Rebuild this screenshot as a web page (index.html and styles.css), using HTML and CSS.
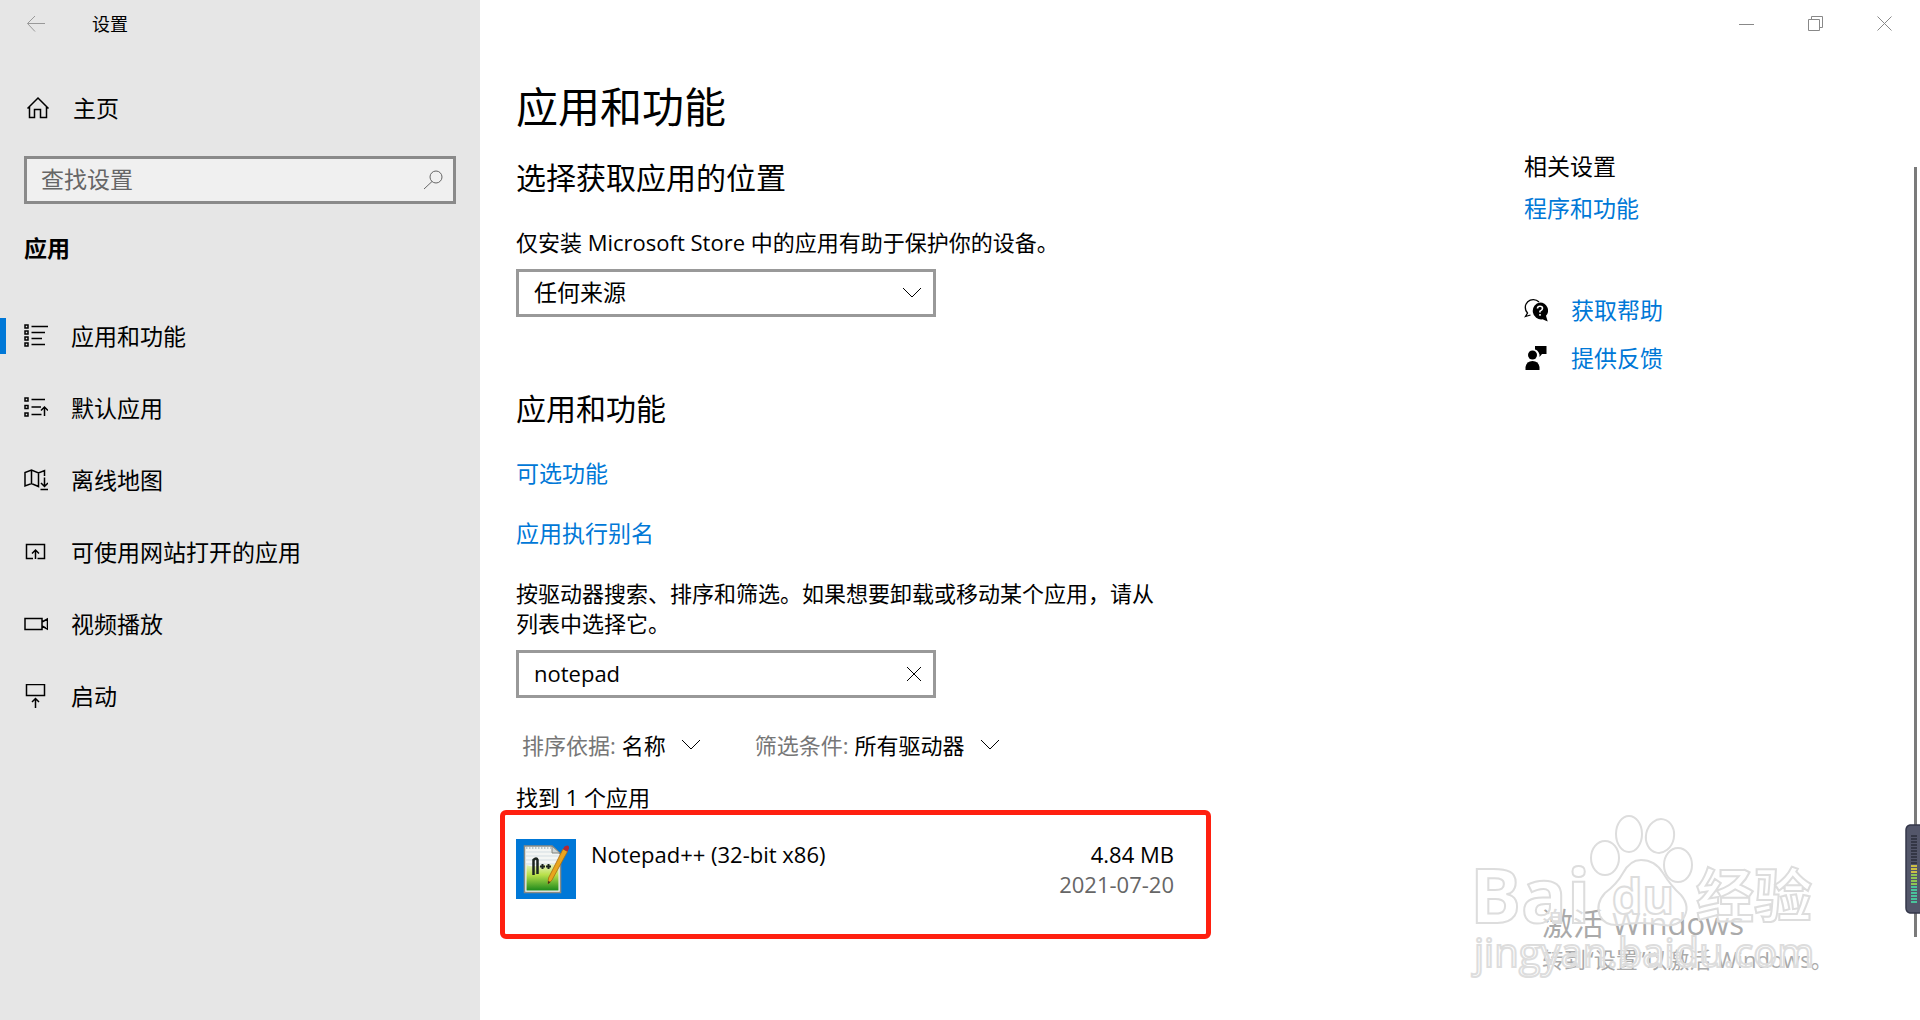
FILE: index.html
```html
<!DOCTYPE html>
<html lang="zh-CN">
<head>
<meta charset="utf-8">
<title>设置</title>
<link rel="stylesheet" href="styles.css">
</head>
<body>
<div class="window">
  <aside class="sidebar">
    <header class="app-bar">
      <button class="back" type="button" aria-label="返回">
        <svg width="20" height="18" viewBox="0 0 20 18"><path d="M9 1 1.5 8.500 9 16.500M1.500 8.500H19"/></svg>
      </button>
      <span class="app-name">设置</span>
    </header>
    <a class="home" href="#">
      <svg width="24" height="24" viewBox="0 0 24 24"><path d="M1.500 12.500 12 2l10.500 10.500M3.500 10.500V21.500h5v-8h6v8h6V10.500"/></svg>
      <span>主页</span>
    </a>
    <div class="search">
      <input type="search" placeholder="查找设置" aria-label="查找设置">
      <svg width="20" height="20" viewBox="0 0 20 20"><circle cx="13" cy="7" r="6"/><path d="M9 11.500 1 19"/></svg>
    </div>
    <h2 class="group">应用</h2>
    <nav class="nav">
      <a class="nav-item current" href="#">
        <svg width="24" height="24" viewBox="0 0 24 24"><path d="M1 1h3v3H1zM1 7h3v3H1zM1 13h3v3H1zM1 19h3v3H1zM7.500 2.500H24M7.500 8.500H21M7.500 14.500H18M7.500 20.500H21"/></svg>
        <span>应用和功能</span>
      </a>
      <a class="nav-item" href="#">
        <svg width="24" height="24" viewBox="0 0 24 24"><path d="M1 2h3v3H1zM1 9.500h3v3H1zM1 17h3v3H1zM7.500 3.500H21M7.500 11H17M7.500 18.500H17.500M20.500 20V11M17 14.500l3.500-3.500 3.500 3.500"/></svg>
        <span>默认应用</span>
      </a>
      <a class="nav-item" href="#">
        <svg width="24" height="24" viewBox="0 0 24 24"><path d="M20.500 8V2.500l-6 2.500-7-3-6.500 2.500V18l6.500-2.500 7 3V5M7.500 2v13.500M20.500 9.500v9M17 15l3.500 3.500L24 15M16.500 21.500H24"/></svg>
        <span>离线地图</span>
      </a>
      <a class="nav-item" href="#">
        <svg width="24" height="24" viewBox="0 0 24 24"><path d="M9 18.500H2.500v-14h18v14H13.500M11.500 19V10M8 13.500l3.500-3.500 3.500 3.500"/></svg>
        <span>可使用网站打开的应用</span>
      </a>
      <a class="nav-item" href="#">
        <svg width="24" height="24" viewBox="0 0 24 24"><path d="M1 6.500h17v11H1zM18 10l5.500-3v10L18 14"/></svg>
        <span>视频播放</span>
      </a>
      <a class="nav-item" href="#">
        <svg width="24" height="24" viewBox="0 0 24 24"><path d="M2.500 .500h18v11h-18zM11.500 24V14.500M8 18l3.500-3.500L15 18"/></svg>
        <span>启动</span>
      </a>
    </nav>
  </aside>

  <div class="page">
    <header class="window-bar">
      <button type="button" aria-label="最小化"><svg width="16" height="16" viewBox="0 0 16 16"><path d="M0 8.500h15"/></svg></button>
      <button type="button" aria-label="还原"><svg width="16" height="16" viewBox="0 0 16 16"><path d="M.500 3.500h11v11H.500zM3.500 3.500v-3h11v11h-3"/></svg></button>
      <button type="button" aria-label="关闭"><svg width="16" height="16" viewBox="0 0 16 16"><path d="M.500 .500l14 14M14.500 .500l-14 14"/></svg></button>
    </header>

    <div class="columns">
      <main class="primary">
        <h1>应用和功能</h1>

        <h2 class="source-title">选择获取应用的位置</h2>
        <label class="note" for="source">仅安装 Microsoft Store 中的应用有助于保护你的设备。</label>
        <div class="field">
          <select id="source"><option>任何来源</option></select>
          <svg class="chevron" width="20" height="12" viewBox="0 0 20 12"><path d="M1 1l9 9 9-9"/></svg>
        </div>

        <h2 class="list-title">应用和功能</h2>
        <div class="links">
          <a href="#">可选功能</a>
          <a href="#">应用执行别名</a>
        </div>
        <label class="note" for="filter">按驱动器搜索、排序和筛选。如果想要卸载或移动某个应用，请从列表中选择它。</label>
        <div class="field">
          <input id="filter" type="text" value="notepad">
          <button class="clear" type="button" aria-label="清除"><svg width="16" height="16" viewBox="0 0 16 16"><path d="M1 1l14 14M15 1L1 15"/></svg></button>
        </div>

        <div class="sorting">
          <div class="pick">
            <label for="sort">排序依据:</label>
            <select id="sort"><option>名称</option></select>
            <svg class="chevron" width="20" height="12" viewBox="0 0 20 12"><path d="M1 1l9 9 9-9"/></svg>
          </div>
          <div class="pick">
            <label for="drive">筛选条件:</label>
            <select id="drive"><option>所有驱动器</option></select>
            <svg class="chevron" width="20" height="12" viewBox="0 0 20 12"><path d="M1 1l9 9 9-9"/></svg>
          </div>
        </div>

        <p class="found">找到 1 个应用</p>
        <article class="app">
          <svg class="app-icon" width="60" height="60" viewBox="0 0 60 60">
            <defs>
              <linearGradient id="grass" x1="0" y1="0" x2="0" y2="1">
                <stop offset="0" stop-color="#e8f2c0"/><stop offset=".4" stop-color="#b9e04a"/><stop offset="1" stop-color="#1d8a1c"/>
              </linearGradient>
            </defs>
            <path fill="#0078d7" d="M0 0h60v60H0z"/>
            <path fill="#f4f6f4" stroke="#8b8b83" stroke-width="1.500" d="M8.500 7H36l8.500 8v38.500h-36z"/>
            <path stroke="#b9c8cc" stroke-width="2" stroke-dasharray="1.500 1.500" d="M10 9h25"/>
            <path stroke="#d3dde2" d="M10 13h25M10 17h33M10 21h33M10 25h33"/>
            <path fill="url(#grass)" d="M10.500 26c10 4 20-3 32 0v25.500h-32z"/>
            <path fill="#cfd4d4" stroke="#80847e" d="M36 7v7h8z"/>
            <path fill="none" stroke="#1c2420" stroke-width="2.500" d="M17.500 36V21q3-3 4 0v14"/>
            <path stroke="#1c2420" stroke-width="2" d="M24 27.500h5M26.500 25v5M30 27.500h5M32.500 25v5"/>
            <path fill="#e9a51d" stroke="#a86c12" stroke-width=".800" d="M47 10l4.500 2.500L36 41l-4 4 .500-6z"/>
            <path fill="#b32634" d="M48.500 7.500q5-3 4.500 2L51.500 12.500 47 10z"/>
            <path fill="#3a2d1c" d="M32 45l.2-3 2.300 1z"/>
          </svg>
          <div class="app-name-cell">Notepad++ (32-bit x86)</div>
          <div class="app-meta">
            <div>4.84 MB</div>
            <time datetime="2021-07-20">2021-07-20</time>
          </div>
          <div class="highlight"></div>
        </article>
      </main>

      <aside class="related">
        <h2>相关设置</h2>
        <a href="#">程序和功能</a>
        <div class="help">
          <a href="#">
            <svg class="solid" width="24" height="24" viewBox="0 0 24 24"><path fill="none" stroke="#000" stroke-width="1.300" d="M6.500 17 1.500 18.500l2-3.500A7.500 7.500 0 1 1 15 4"/><path d="M16 4.500a8 8 0 0 1 6 13.300l1.700 5.700-5.200-2.200A8.200 8.200 0 1 1 16 4.500z"/><path fill="none" stroke="#fff" stroke-width="1.600" d="M13.500 10.500q0-2.200 2.500-2.200t2.500 2-2.500 3v1.200M16 16v1.700"/></svg>
            <span>获取帮助</span>
          </a>
          <a href="#">
            <svg class="solid" width="24" height="24" viewBox="0 0 24 24"><path d="M11 0h11.500v8H18l-2.500 3V8.500Q14 4 11 3.500z"/><circle cx="8.500" cy="9" r="4.500"/><path d="M1.500 24v-3q1-6 7-6t7 6v3z"/></svg>
            <span>提供反馈</span>
          </a>
        </div>
      </aside>
    </div>

    <div class="scrollbar"></div>
    <svg class="meter" width="15" height="90" viewBox="0 0 15 90">
      <path fill="#53566a" stroke="#34374a" stroke-width="1.500" d="M16 1H5Q1 2 1 6v78q0 4 4 5h11z"/>
      <path stroke="#343746" stroke-width="6" stroke-dasharray="2 1" d="M9 11v30"/>
      <path stroke="#cdbf45" stroke-width="6" stroke-dasharray="2 1" d="M9 41v9"/>
      <path stroke="#8fc653" stroke-width="6" stroke-dasharray="2 1" d="M9 50v12"/>
      <path stroke="#49c39b" stroke-width="6" stroke-dasharray="2 1" d="M9 62v18"/>
    </svg>

    <div class="activation">
      <div class="activation-title">激活 Windows</div>
      <div class="activation-text">转到“设置”以激活 Windows。</div>
    </div>
    <svg class="watermark" width="360" height="180" viewBox="0 0 360 180">
      <g class="mark">
        <ellipse cx="135" cy="48" rx="14" ry="17"/>
        <ellipse cx="159" cy="24" rx="13" ry="18"/>
        <ellipse cx="190" cy="26" rx="14" ry="17" transform="rotate(12 190 26)"/>
        <ellipse cx="208" cy="55" rx="14" ry="17"/>
        <path d="M171 50q14 0 22 13t18 22q10 12 2 24-7 8-20 6-22-4-44 0-14 1-19-9-5-12 5-23 12-9 18-20 7-13 18-13z"/>
        <text class="mark-brand" x="0" y="113">Bai</text>
        <text class="mark-du" x="142" y="104">du</text>
        <text class="mark-cn" x="226" y="107">经验</text>
        <text class="mark-url" x="4" y="157">jingyan.baidu.com</text>
      </g>
    </svg>
  </div>
</div>
</body>
</html>
```
FILE: styles.css
```css
* {
  box-sizing: border-box;
}

body {
  margin: 0;
  background: #fff;
  color: #000;
  font: 23px/30px "Open Sans", "Noto Sans CJK SC", sans-serif;
}

h1,
h2,
p {
  margin: 0;
  font-weight: 400;
}

a {
  color: #0078d7;
  text-decoration: none;
}

button,
input,
select {
  margin: 0;
  padding: 0;
  border: 0;
  background: none;
  color: inherit;
  font: inherit;
  appearance: none;
}

svg {
  display: block;
  flex: none;
  fill: none;
  stroke: currentColor;
}

.solid {
  fill: #000;
  stroke: none;
}

.window {
  display: grid;
  grid-template-columns: 480px 1fr;
  min-height: 100vh;
}

/* Sidebar */

.sidebar {
  background: #e6e6e6;
}

.home svg,
.nav svg {
  stroke-width: 1.5;
}

.app-bar {
  display: flex;
  align-items: center;
  height: 48px;
}

.back {
  padding: 0 26px;
  color: #999;
}

.app-name {
  padding-left: 20px;
  font-size: 18px;
}

.home {
  display: flex;
  align-items: center;
  gap: 23px;
  height: 48px;
  margin-top: 36px;
  padding-left: 26px;
  color: #000;
}

.search {
  display: flex;
  align-items: center;
  height: 48px;
  margin: 24px 24px 0;
  padding: 0 10px 0 14px;
  border: 3px solid #8a8a8a;
  background: #f0f0f0;
  color: #666;
}

.search input {
  flex: 1;
  min-width: 0;
  padding-bottom: 2px;
}

.search input::placeholder {
  color: #666;
  opacity: 1;
}

.group {
  margin: 29px 24px 0;
  font-size: 23px;
  font-weight: 700;
}

.nav {
  margin-top: 37px;
}

.nav-item {
  display: flex;
  align-items: center;
  gap: 23px;
  height: 72px;
  padding-left: 24px;
  color: #000;
}

.current {
  background: linear-gradient(#0078d7, #0078d7) 0 center / 6px 36px no-repeat;
}

/* Content */

.page {
  position: relative;
}

.window-bar {
  display: flex;
  justify-content: flex-end;
  height: 48px;
  padding-right: 1px;
  color: #888;
}

.window-bar button {
  display: grid;
  place-items: center;
  width: 69px;
}

.columns {
  display: flex;
  justify-content: space-between;
  padding-left: 36px;
}

.primary {
  flex: 0 1 658px;
  padding: 31px 0 60px;
}

h1 {
  font-size: 42px;
  line-height: 56px;
}

.source-title,
.list-title {
  margin-top: 23px;
  font-size: 30px;
  line-height: 40px;
}

.list-title {
  margin-top: 72px;
}

.note {
  display: block;
  margin-top: 29px;
  font-size: 22px;
}

.field {
  display: flex;
  align-items: center;
  width: 420px;
  height: 48px;
  margin-top: 12px;
  padding: 0 11px 0 15px;
  border: 3px solid #999;
}

.field select,
.field input {
  flex: 1;
  min-width: 0;
  padding-bottom: 2px;
}

.field input {
  font-size: 22px;
}

.links {
  display: grid;
  justify-items: start;
  gap: 30px;
  margin-top: 29px;
}

.links + .note {
  margin-top: 30px;
}

.sorting {
  display: flex;
  gap: 54px;
  margin-top: 32px;
  padding-left: 6px;
  font-size: 22px;
}

.pick {
  display: flex;
  align-items: center;
}

.pick label {
  margin-right: 6px;
  color: #777;
}

.pick .chevron {
  margin-left: 14px;
}

.found {
  margin-top: 22px;
  font-size: 22px;
}

.app {
  position: relative;
  display: flex;
  margin-top: 27px;
  font-size: 22px;
}

.app-icon {
  stroke: none;
}

.app-name-cell {
  flex: 1;
  padding-left: 15px;
}

.app-meta {
  text-align: right;
}

.app-meta time {
  color: #666;
}

.highlight {
  position: absolute;
  inset: -29px -37px -40px -16px;
  border: 5px solid #ff2010;
  border-radius: 6px;
}

/* Related settings */

.related {
  width: 396px;
  padding-top: 103px;
}

.related h2 {
  margin-bottom: 12px;
  font-size: 23px;
}

.help {
  display: grid;
  gap: 18px;
  margin-top: 72px;
}

.help a {
  display: flex;
  align-items: center;
  gap: 23px;
}

/* Overlays */

.scrollbar {
  position: absolute;
  top: 167px;
  right: 3px;
  bottom: 83px;
  width: 3px;
  background: #7a7a7a;
}

.meter {
  position: absolute;
  right: 0;
  bottom: 106px;
}

.activation {
  position: absolute;
  right: 94px;
  bottom: 46px;
  width: 284px;
  color: #aaa;
  white-space: nowrap;
}

.activation-title {
  font-size: 31px;
  line-height: 42px;
}

.activation-text {
  font-size: 22px;
}

.watermark {
  position: absolute;
  right: 90px;
  bottom: 30px;
}

.mark {
  fill: #fff;
  fill-opacity: 0.6;
  stroke: #ddd;
  stroke-width: 2;
}

.mark text {
  font-family: "Open Sans", "Noto Sans CJK SC", sans-serif;
  font-weight: 700;
}

.mark-brand {
  font-size: 76px;
}

.mark-du {
  font-size: 48px;
}

.mark-cn {
  font-size: 58px;
}

.mark .mark-url {
  font-size: 40px;
  font-weight: 400;
}
```
